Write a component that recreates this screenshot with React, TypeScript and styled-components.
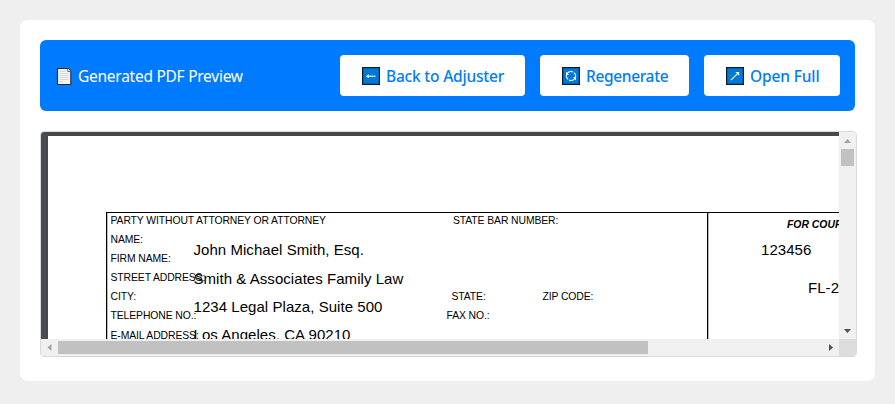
import React from 'react';
import styled, { createGlobalStyle } from 'styled-components';

const GlobalStyle = createGlobalStyle`
  * { box-sizing: border-box; }
  body {
    margin: 0;
    background: #efefef;
    font-family: "Noto Sans", "Open Sans", sans-serif;
    overflow: hidden;
  }
`;

const Screen = styled.main`
  height: 404px;
  padding: 20px 20px 23px;
`;

const Card = styled.section`
  display: flex;
  flex-direction: column;
  gap: 20px;
  height: 361px;
  padding: 20px;
  border-radius: 8px;
  background: #fff;
`;

const Header = styled.header`
  display: flex;
  align-items: center;
  justify-content: space-between;
  flex: none;
  height: 71px;
  padding: 15px;
  border-radius: 6px;
  background: #007bff;
  color: #fff;
`;

const Title = styled.div`
  display: flex;
  align-items: center;
  gap: 5px;
  padding-left: 1px;
  font-size: 15.5px;
  line-height: 22px;
  white-space: nowrap;
`;

const TitleText = styled.span`
  letter-spacing: -0.26px;
`;

const Actions = styled.div`
  display: flex;
  gap: 15px;
`;

const ActionButton = styled.button<{ $width: number }>`
  display: flex;
  align-items: center;
  gap: 6px;
  width: ${(p) => p.$width}px;
  height: 41px;
  padding: 1px 0 0 22px;
  border: 0;
  border-radius: 4px;
  background: #fff;
  color: #007bff;
  font: 500 15.5px "Noto Sans", sans-serif;
  white-space: nowrap;
`;

const ButtonText = styled.span<{ $spacing: number }>`
  letter-spacing: ${(p) => p.$spacing}px;
`;

const Viewer = styled.div`
  display: grid;
  grid-template-columns: 798px 17px;
  grid-template-rows: 207px 17px;
  flex: none;
  width: 817px;
  height: 226px;
  border: 1px solid #d9d9d9;
  border-radius: 4px;
  overflow: hidden;
`;

const Viewport = styled.div`
  overflow: hidden;
  padding: 4px 0 0 7px;
  background: linear-gradient(90deg, #4b4f52, #45494c 8px);
`;

const PdfPage = styled.div`
  position: relative;
  width: 1000px;
  height: 1200px;
  padding: 76px 0 0 58px;
  background: #fff;
`;

const Form = styled.div`
  display: grid;
  grid-template-columns: 601px 300px;
  height: 900px;
  border: 1px solid #000;
  box-shadow: inset 1px 0 0 #bbb;
  font: 10.4px "Liberation Sans", Arial, sans-serif;
  color: #000;
`;

const PartyCell = styled.div`
  border-right: 1px solid #000;
  box-shadow: 1px 0 0 #bbb;
`;

const FormRow = styled.div<{ $columns: string; $drop?: number }>`
  display: grid;
  grid-template-columns: ${(p) => p.$columns};
  height: 19px;
  line-height: 16px;
  padding-top: ${(p) => p.$drop ?? 0}px;
  padding-left: 3.5px;
  white-space: nowrap;
`;

const Label = styled.span`
  letter-spacing: -0.1px;
`;

const CourtHeading = styled.div`
  padding: 4px 0 0 79px;
  font-weight: 700;
  font-style: italic;
  line-height: 16px;
  white-space: nowrap;
`;

/* Filled-in values are stamped freely over the printed form. */
const Stamp = styled.span<{ $x: number; $y: number }>`
  position: absolute;
  left: ${(p) => p.$x}px;
  top: ${(p) => p.$y}px;
  font: 15px/18px "Liberation Sans", Arial, sans-serif;
  letter-spacing: 0.05px;
  color: #000;
  white-space: nowrap;
`;

const VerticalBar = styled.div`
  display: flex;
  flex-direction: column;
  align-items: center;
  background: #f0f0f0;
`;

const HorizontalBar = styled.div`
  display: flex;
  align-items: center;
  background: #f0f0f0;
`;

const ArrowBox = styled.div`
  display: flex;
  flex: none;
  width: 17px;
  height: 17px;
`;

const Thumb = styled.div<{ $w: number; $h: number }>`
  flex: none;
  width: ${(p) => p.$w}px;
  height: ${(p) => p.$h}px;
  background: #c1c1c1;
`;

const Spacer = styled.div`
  flex: 1;
`;

const Corner = styled.div`
  background: #dcdcdc;
`;

const PageIcon = () => (
  <svg width="17" height="20" viewBox="0 0 17 20">
    <path d="M1.5 2.5H12L14.8 5.3V18.5H1.5Z" fill="#f2f2f2" stroke="#222b35" strokeWidth="1.1" />
    <path d="M11.8 2.5V5.5H14.8" fill="#fff" stroke="#444c55" strokeWidth="0.8" />
    <path d="M3.5 5.5H9.5M3.5 7.5H12.5M3.5 9.5H12.5M3.5 11.5H12.5M3.5 13.5H12.5M3.5 15.5H6.5" stroke="#d0d0d0" strokeWidth="0.8" />
  </svg>
);

const Tile = ({ children }: { children: React.ReactNode }) => (
  <svg width="18" height="18" viewBox="0 0 18 18" fill="none" stroke="#fff" strokeWidth="1.1">
    <rect x="0.6" y="0.6" width="16.8" height="16.8" fill="#0078d7" stroke="#0a1b29" strokeWidth="1.2" />
    {children}
  </svg>
);

const BackIcon = () => (
  <Tile>
    <path d="M13.5 9.2H5" />
    <path d="M4 9.2L6.7 7.2V11.2Z" fill="#fff" stroke="none" />
  </Tile>
);

const RefreshIcon = () => (
  <Tile>
    <path d="M5.2 6.3A4.7 4.7 0 0 1 13.5 8.3M12.8 11.7A4.7 4.7 0 0 1 4.5 9.7M4.3 9.5A4.7 4.7 0 0 1 5 6.8M13.7 8.5A4.7 4.7 0 0 1 13 11.2" strokeDasharray="6.2 1.2" />
    <path d="M4 4.7V7.8H7.1ZM14 13.3V10.2H10.9Z" fill="#fff" stroke="none" />
  </Tile>
);

const OpenIcon = () => (
  <Tile>
    <path d="M5 13.2L12 6.2" />
    <path d="M13.2 5V8.8L9.4 5Z" fill="#fff" stroke="none" />
  </Tile>
);

const arrowPaths = {
  up: 'M5 11L8.5 7L12 11Z',
  down: 'M5 7L12 7L8.5 11Z',
  left: 'M10.5 5V12L6.5 8.5Z',
  right: 'M7 5V12L11 8.5Z',
};

const Arrow = ({ direction, color }: { direction: keyof typeof arrowPaths; color: string }) => (
  <ArrowBox>
    <svg width="17" height="17"><path d={arrowPaths[direction]} fill={color} /></svg>
  </ArrowBox>
);

const stamps = [
  { x: 145.5, y: 105, text: 'John Michael Smith, Esq.' },
  { x: 145.5, y: 134, text: 'Smith & Associates Family Law' },
  { x: 145.5, y: 162, text: '1234 Legal Plaza, Suite 500' },
  { x: 145.5, y: 190, text: 'Los Angeles, CA 90210' },
  { x: 713, y: 105, text: '123456' },
  { x: 760, y: 143, text: 'FL-2024-001234' },
];

export default function App() {
  return (
    <>
      <GlobalStyle />
      <Screen>
        <Card>
          <Header>
            <Title><PageIcon /><TitleText>Generated PDF Preview</TitleText></Title>
            <Actions>
              <ActionButton $width={185}><BackIcon /><ButtonText $spacing={-0.2}>Back to Adjuster</ButtonText></ActionButton>
              <ActionButton $width={149}><RefreshIcon /><ButtonText $spacing={-0.35}>Regenerate</ButtonText></ActionButton>
              <ActionButton $width={136}><OpenIcon /><ButtonText $spacing={-0.14}>Open Full</ButtonText></ActionButton>
            </Actions>
          </Header>
          <Viewer>
            <Viewport>
              <PdfPage>
                <Form>
                  <PartyCell>
                    <FormRow $columns="342.5px auto">
                      <Label>PARTY WITHOUT ATTORNEY OR ATTORNEY</Label>
                      <Label>STATE BAR NUMBER:</Label>
                    </FormRow>
                    <FormRow $columns="auto"><Label>NAME:</Label></FormRow>
                    <FormRow $columns="auto"><Label>FIRM NAME:</Label></FormRow>
                    <FormRow $columns="auto"><Label>STREET ADDRESS:</Label></FormRow>
                    <FormRow $columns="341px 91px auto">
                      <Label>CITY:</Label><Label>STATE:</Label><Label>ZIP CODE:</Label>
                    </FormRow>
                    <FormRow $columns="336px auto">
                      <Label>TELEPHONE NO.:</Label><Label>FAX NO.:</Label>
                    </FormRow>
                    <FormRow $columns="auto" $drop={1}><Label>E-MAIL ADDRESS:</Label></FormRow>
                  </PartyCell>
                  <CourtHeading>FOR COURT USE ONLY</CourtHeading>
                </Form>
                {stamps.map((s) => <Stamp key={s.text} $x={s.x} $y={s.y}>{s.text}</Stamp>)}
              </PdfPage>
            </Viewport>
            <VerticalBar>
              <Arrow direction="up" color="#a3a3a3" />
              <Thumb $w={13} $h={17} />
              <Spacer />
              <Arrow direction="down" color="#505050" />
            </VerticalBar>
            <HorizontalBar>
              <Arrow direction="left" color="#a3a3a3" />
              <Thumb $w={590} $h={13} />
              <Spacer />
              <Arrow direction="right" color="#505050" />
            </HorizontalBar>
            <Corner />
          </Viewer>
        </Card>
      </Screen>
    </>
  );
}
